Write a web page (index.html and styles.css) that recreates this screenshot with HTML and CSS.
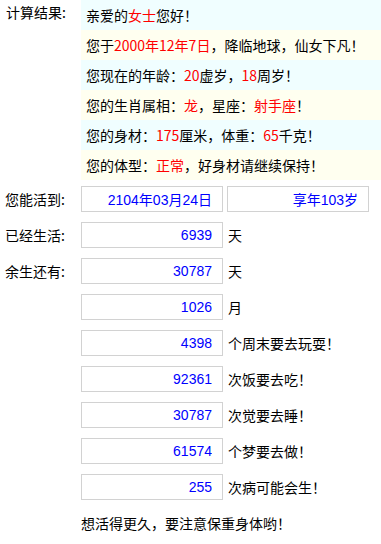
FILE: index.html
```
<!DOCTYPE html>
<html lang="zh-CN">
<head>
<meta charset="utf-8">
<title>计算结果</title>
<link rel="stylesheet" href="styles.css">
</head>
<body>
<div class="page">
  <div class="row result-row">
    <div class="label label-top">计算结果:</div>
    <div class="result">
      <div class="line cyan">亲爱的<span class="red">女士</span>您好！</div>
      <div class="line ivory">您于<span class="red">2000年12年7日</span>，降临地球，仙女下凡！</div>
      <div class="line cyan">您现在的年龄：<span class="red">20</span>虚岁，<span class="red">18</span>周岁！</div>
      <div class="line ivory">您的生肖属相：<span class="red">龙</span>，星座：<span class="red">射手座</span>！</div>
      <div class="line cyan">您的身材：<span class="red">175</span>厘米，体重：<span class="red">65</span>千克！</div>
      <div class="line ivory">您的体型：<span class="red">正常</span>，好身材请继续保持！</div>
    </div>
  </div>
  <div class="form">
    <div class="row">
      <div class="label">您能活到:</div>
      <div class="fields">
        <input class="box" readonly value="2104年03月24日">
        <input class="box" readonly value="享年103岁">
      </div>
    </div>
    <div class="row">
      <div class="label">已经生活:</div>
      <div class="fields"><input class="box" readonly value="6939"><span class="unit">天</span></div>
    </div>
    <div class="row">
      <div class="label">余生还有:</div>
      <div class="fields"><input class="box" readonly value="30787"><span class="unit">天</span></div>
    </div>
    <div class="row">
      <div class="label"></div>
      <div class="fields"><input class="box" readonly value="1026"><span class="unit">月</span></div>
    </div>
    <div class="row">
      <div class="label"></div>
      <div class="fields"><input class="box" readonly value="4398"><span class="unit">个周末要去玩耍！</span></div>
    </div>
    <div class="row">
      <div class="label"></div>
      <div class="fields"><input class="box" readonly value="92361"><span class="unit">次饭要去吃！</span></div>
    </div>
    <div class="row">
      <div class="label"></div>
      <div class="fields"><input class="box" readonly value="30787"><span class="unit">次觉要去睡！</span></div>
    </div>
    <div class="row">
      <div class="label"></div>
      <div class="fields"><input class="box" readonly value="61574"><span class="unit">个梦要去做！</span></div>
    </div>
    <div class="row">
      <div class="label"></div>
      <div class="fields"><input class="box" readonly value="255"><span class="unit">次病可能会生！</span></div>
    </div>
  </div>
  <div class="row">
    <div class="label"></div>
    <div class="footer">想活得更久，要注意保重身体哟！</div>
  </div>
</div>
</body>
</html>
```
FILE: styles.css
```
html, body {
  margin: 0;
  padding: 0;
  background: #ffffff;
}
body {
  font-family: "Noto Sans CJK SC", "Noto Sans", sans-serif;
  font-size: 14px;
  color: #000000;
}
.page {
  display: flex;
  flex-direction: column;
  width: 381px;
}
.row {
  display: flex;
  align-items: center;
}
.result-row {
  align-items: flex-start;
}
.label {
  width: 76px;
  padding-left: 5px;
  flex: none;
  line-height: 20px;
  white-space: nowrap;
}
.label-top {
  padding-top: 2px;
  padding-left: 6px;
  width: 75px;
}
.result {
  flex: 1;
  display: flex;
  flex-direction: column;
}
.line {
  height: 30px;
  line-height: 30px;
  padding-left: 5px;
  white-space: nowrap;
}
.cyan {
  background: #f0feff;
}
.ivory {
  background: #fffff0;
}
.red {
  color: #ff0000;
}
.form {
  display: flex;
  flex-direction: column;
  gap: 10px;
  margin-top: 6px;
}
.fields {
  display: flex;
  align-items: center;
  gap: 4px;
}
.box {
  box-sizing: border-box;
  width: 142px;
  height: 26px;
  margin: 0;
  border: 1px solid #d2d2d2;
  background: #ffffff;
  padding: 0 10px 0 4px;
  text-align: right;
  font-family: "Liberation Sans", "Noto Sans CJK SC", sans-serif;
  font-size: 14px;
  color: #0000ff;
  outline: none;
}
.unit {
  margin-left: 1px;
  line-height: 26px;
  white-space: nowrap;
}
.footer {
  margin-top: 10px;
  line-height: 26px;
  white-space: nowrap;
}
```
